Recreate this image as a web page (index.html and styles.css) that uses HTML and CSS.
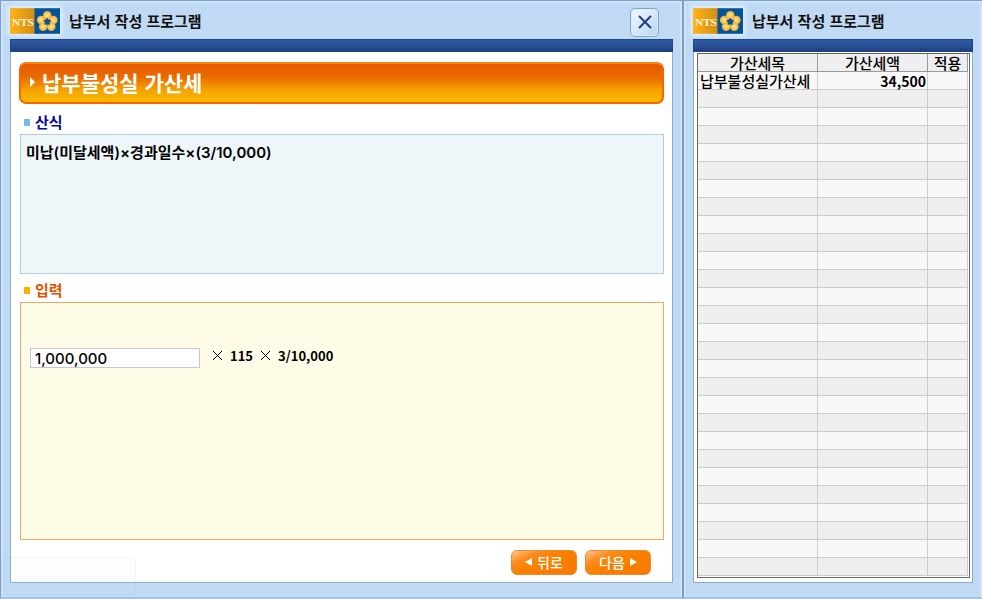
FILE: index.html
```html
<!DOCTYPE html>
<html lang="ko">
<head>
    <meta charset="UTF-8">
    <meta name="viewport" content="width=device-width, initial-scale=1.0">
    <title>납부서 작성 프로그램</title>
    <link rel="stylesheet" href="styles.css">
</head>
<body>
    <svg width="0" height="0" class="defs" aria-hidden="true">
        <defs>
            <linearGradient id="gold" x1="0" y1="0" x2="1" y2="0">
                <stop offset="0" stop-color="#ffb414"/>
                <stop offset="1" stop-color="#d18a16"/>
            </linearGradient>
            <radialGradient id="petal">
                <stop offset="0" stop-color="#ffe9a0"/>
                <stop offset="1" stop-color="#f3ac28"/>
            </radialGradient>
            <symbol id="logo" viewBox="0 0 49 25">
                <rect width="25" height="25" fill="url(#gold)"/>
                <rect x="24" width="25" height="25" fill="#00549c"/>
                <text x="2" y="17" class="logo-text">NTS</text>
                <g fill="url(#petal)">
                    <circle cx="36.500" cy="7" r="4.200"/>
                    <circle cx="42.500" cy="11.500" r="4.200"/>
                    <circle cx="40.500" cy="18" r="4.200"/>
                    <circle cx="32.500" cy="18" r="4.200"/>
                    <circle cx="30.500" cy="11.500" r="4.200"/>
                </g>
                <path d="M36.500 9l1.300 2.300 2.700.5-1.800 2 .4 2.700-2.600-1-2.600 1 .4-2.700-1.800-2 2.700-.5z" fill="#00549c"/>
            </symbol>
        </defs>
    </svg>

    <main class="window window-main">
        <header class="titlebar">
            <svg class="logo" role="img" aria-label="NTS"><use href="#logo"/></svg>
            <h1>납부서 작성 프로그램</h1>
            <button type="button" class="close" aria-label="닫기">
                <svg width="14" height="14" viewBox="0 0 14 14"><path d="M1 1l12 12M13 1L1 13" stroke="#1f3f7f" stroke-width="2"/></svg>
            </button>
        </header>
        <div class="panel">
            <div class="bar"></div>
            <div class="content">
                <h2 class="banner">
                    <svg width="6" height="10" viewBox="0 0 6 10"><path d="M0 0l5 5-5 5z" fill="#fff"/></svg>
                    납부불성실 가산세
                </h2>
                <h3 class="label label-blue">산식</h3>
                <div class="box formula">미납(미달세액)×경과일수×(3/10,000)</div>
                <h3 class="label label-orange">입력</h3>
                <div class="box entry">
                    <input type="text" value="1,000,000" aria-label="미납(미달세액)">
                    <svg class="times" viewBox="0 0 11 11"><path d="M1 1l9 9M10 1l-9 9" stroke="#000"/></svg>
                    <span>115</span>
                    <svg class="times" viewBox="0 0 11 11"><path d="M1 1l9 9M10 1l-9 9" stroke="#000"/></svg>
                    <span>3/10,000</span>
                </div>
                <div class="actions">
                    <button type="button" class="btn"><svg width="7" height="8" viewBox="0 0 7 8"><path d="M7 0v8L0 4z" fill="#fff"/></svg>뒤로</button>
                    <button type="button" class="btn">다음<svg width="7" height="8" viewBox="0 0 7 8"><path d="M0 0v8l7-4z" fill="#fff"/></svg></button>
                </div>
            </div>
        </div>
        <div class="ghost"></div>
    </main>

    <aside class="window window-side">
        <header class="titlebar">
            <svg class="logo" role="img" aria-label="NTS"><use href="#logo"/></svg>
            <h1>납부서 작성 프로그램</h1>
        </header>
        <div class="panel">
            <div class="bar"></div>
            <div class="grid">
                <table>
                    <colgroup><col class="col-name"><col class="col-amount"><col class="col-apply"></colgroup>
                    <thead>
                        <tr><th>가산세목</th><th>가산세액</th><th>적용</th></tr>
                    </thead>
                    <tbody>
                        <tr><td>납부불성실가산세</td><td class="num">34,500</td><td></td></tr>
                        <tr><td></td><td></td><td></td></tr>
                        <tr><td></td><td></td><td></td></tr>
                        <tr><td></td><td></td><td></td></tr>
                        <tr><td></td><td></td><td></td></tr>
                        <tr><td></td><td></td><td></td></tr>
                        <tr><td></td><td></td><td></td></tr>
                        <tr><td></td><td></td><td></td></tr>
                        <tr><td></td><td></td><td></td></tr>
                        <tr><td></td><td></td><td></td></tr>
                        <tr><td></td><td></td><td></td></tr>
                        <tr><td></td><td></td><td></td></tr>
                        <tr><td></td><td></td><td></td></tr>
                        <tr><td></td><td></td><td></td></tr>
                        <tr><td></td><td></td><td></td></tr>
                        <tr><td></td><td></td><td></td></tr>
                        <tr><td></td><td></td><td></td></tr>
                        <tr><td></td><td></td><td></td></tr>
                        <tr><td></td><td></td><td></td></tr>
                        <tr><td></td><td></td><td></td></tr>
                        <tr><td></td><td></td><td></td></tr>
                        <tr><td></td><td></td><td></td></tr>
                        <tr><td></td><td></td><td></td></tr>
                        <tr><td></td><td></td><td></td></tr>
                        <tr><td></td><td></td><td></td></tr>
                        <tr><td></td><td></td><td></td></tr>
                        <tr><td></td><td></td><td></td></tr>
                        <tr><td></td><td></td><td></td></tr>
                    </tbody>
                </table>
            </div>
        </div>
    </aside>
</body>
</html>
```
FILE: styles.css
```css
* {
    box-sizing: border-box;
}

body {
    margin: 0;
    min-height: 100vh;
    display: flex;
    background-color: #c0daf3;
    font-family: "Noto Sans CJK KR", sans-serif;
    font-size: 14px;
    color: #000;
}

h1, h2, h3 {
    margin: 0;
}

.defs {
    position: absolute;
}

.window {
    position: relative;
    display: flex;
    flex-direction: column;
    padding: 2px 9px 14px;
    background-color: #c0daf3;
    border-top: 1px solid #849fbd;
    border-bottom: 2px solid #a8c4df;
    box-shadow: inset 2px 2px #cce4fb, inset -2px 0 #cce4fb;
}

.window-main {
    flex: 1;
    border-left: 1px solid #849fbd;
}

.window-side {
    width: 300px;
    border-left: 2px solid #849fbd;
}

.titlebar {
    display: flex;
    align-items: center;
    gap: 9px;
    height: 36px;
}

.titlebar h1 {
    font-size: 15px;
    line-height: 20px;
    color: #111;
}

.logo {
    width: 50px;
    height: 26px;
    box-shadow: 0 0 5px 2px #e2f0ff;
}

.logo-text {
    font-family: "Liberation Serif", serif;
    font-size: 11px;
    font-weight: bold;
    fill: #fff3d8;
}

.close {
    display: flex;
    align-items: center;
    justify-content: center;
    width: 29px;
    height: 29px;
    margin-top: 2px;
    margin-left: auto;
    margin-right: 14px;
    padding: 0;
    border: 1px solid #7ea6d2;
    border-radius: 5px;
    background: linear-gradient(135deg, #f2f8ff, #b8d5f3);
    box-shadow: inset 0 0 0 1px #dcecfc;
}

.panel {
    flex: 1;
    display: flex;
    flex-direction: column;
    background-color: #fff;
    border: 1px solid #8faccb;
    border-top: 0;
}

.bar {
    height: 13px;
    margin: 0 -1px;
    background: linear-gradient(#2c5aa0, #2a529a 45%, #1f3e7c);
    border: 1px solid #1f4688;
}

.content {
    flex: 1;
    display: flex;
    flex-direction: column;
    padding: 10px 8px 7px;
}

.banner {
    display: flex;
    align-items: center;
    gap: 6px;
    height: 42px;
    padding-left: 9px;
    padding-bottom: 2px;
    border: 2px solid #f96400;
    border-top-color: #f58412;
    border-radius: 7px;
    background: linear-gradient(#e65a00, #ea6a00 35%, #f5a500 70%, #f6b800);
    color: #fff;
    font-size: 21px;
    line-height: 30px;
}

.label {
    display: flex;
    align-items: center;
    gap: 5px;
    height: 20px;
    margin-top: 8px;
    margin-bottom: 2px;
    padding-left: 5px;
    font-size: 15px;
    line-height: 20px;
}

.label::before {
    content: "";
    width: 6px;
    height: 7px;
    background-color: #7bb8e8;
}

.label-blue {
    color: #0a0a96;
}

.label-orange {
    margin-top: 6px;
    color: #e25400;
}

.label-orange::before {
    background-color: #f9b000;
}

.box {
    margin-left: 1px;
    border: 1px solid #abd2da;
    font-weight: bold;
}

.formula {
    height: 140px;
    padding: 8px 5px;
    background-color: #eef6fa;
    font-family: Inter, "Noto Sans CJK KR", sans-serif;
    font-size: 15px;
    font-weight: 600;
    line-height: 20px;
}

.entry {
    flex: 1;
    display: flex;
    align-items: flex-start;
    gap: 7px;
    padding: 45px 9px 9px;
    border-color: #f0a868;
    background-color: #fefbe6;
    font-size: 13px;
    line-height: 16px;
}

.entry input {
    width: 170px;
    height: 20px;
    margin-right: 5px;
    padding: 0 4px;
    border: 1px solid #c8c8c8;
    background-color: #fff;
    font-family: Inter, sans-serif;
    font-size: 15px;
    font-weight: 500;
    color: #000;
}

.times {
    width: 11px;
    height: 11px;
    margin-top: 2px;
}

.actions {
    display: flex;
    justify-content: flex-end;
    gap: 8px;
    margin-top: 10px;
    padding-right: 13px;
}

.btn {
    display: flex;
    align-items: center;
    justify-content: center;
    gap: 5px;
    width: 66px;
    height: 25px;
    padding: 0 0 2px;
    border: 1px solid #f08a2c;
    border-radius: 6px;
    background: linear-gradient(155deg, #ffc896, #f98c1c 25%, #f88200 45%, #f67800);
    color: #fff;
    font-family: inherit;
    font-size: 14px;
    font-weight: 500;
    line-height: 20px;
}

/* faint leftover of a floating panel in the corner */
.ghost {
    position: absolute;
    left: 0;
    bottom: 2px;
    width: 135px;
    height: 38px;
    border: 1px solid rgba(130, 170, 210, 0.08);
    background-color: rgba(190, 215, 245, 0.06);
    border-radius: 0 3px 3px 0;
}

.grid {
    flex: 1;
    margin: 1px 2px 4px 3px;
    border: 1px solid #666;
    background-color: #fff;
}

table {
    width: calc(100% - 1px);
    table-layout: fixed;
    border-collapse: separate;
    border-spacing: 0;
}

.col-amount {
    width: 110px;
}

.col-apply {
    width: 40px;
}

th, td {
    height: 18px;
    padding: 0 1px 0 2px;
    border-right: 1px solid #ccc;
    border-bottom: 1px solid #ccc;
    font-size: 15px;
    line-height: 16px;
    font-weight: 500;
    white-space: nowrap;
}

th {
    padding: 0;
    background-color: #efefef;
    border-color: #999;
}

td {
    background-color: #f8f8f8;
}

tbody tr:nth-child(even) td {
    background-color: #efefef;
}

.num {
    font-size: 14px;
    font-weight: bold;
    text-align: right;
}
```
